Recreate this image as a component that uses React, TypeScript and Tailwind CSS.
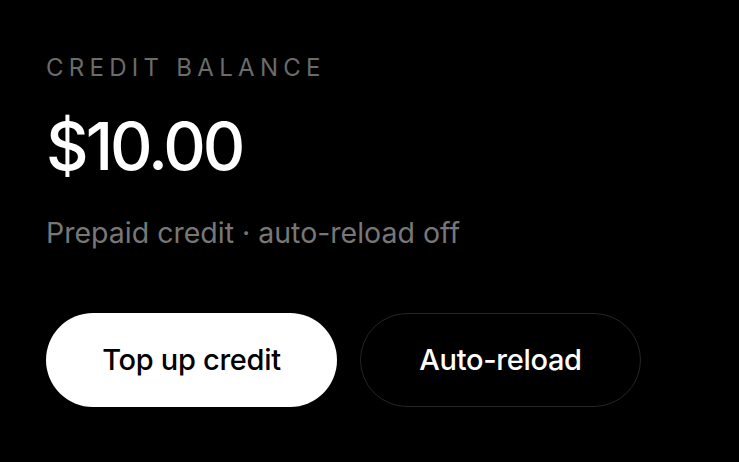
import React from 'react'

export default function App() {
  return (
    <div
      className="min-h-screen w-full bg-black pl-[46px] pt-[52px] text-white"
      style={{ fontFamily: 'Inter, "Noto Sans", sans-serif' }}
    >
      <div className="text-[24px] leading-[32px] tracking-[0.22em] text-[#6b6b6b] uppercase">Credit balance</div>
      <div className="mt-[26px] text-[66px] font-medium leading-[72px] tracking-[-0.045em] text-white">$10.00</div>
      <div className="mt-[33px] text-[28.5px] leading-[36px] text-[#777777]">Prepaid credit · auto-reload off</div>
      <div className="mt-[62px] flex gap-[23px]">
        <button className="h-[94px] w-[291px] rounded-full bg-white text-[29px] font-medium tracking-[-0.01em] text-black">
          Top up credit
        </button>
        <button className="h-[94px] w-[281px] rounded-full border border-[#262626] bg-black text-[29px] font-medium tracking-[-0.01em] text-white">
          Auto-reload
        </button>
      </div>
    </div>
  )
}
